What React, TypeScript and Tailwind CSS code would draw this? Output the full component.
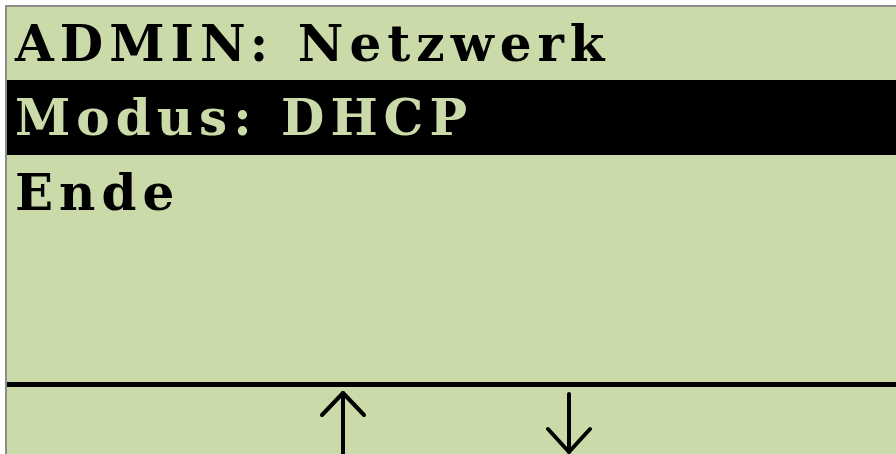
import React from 'react';

const rows = [
  { label: 'ADMIN: Netzwerk', active: false },
  { label: 'Modus: DHCP', active: true },
  { label: 'Ende', active: false },
];

function ArrowUp() {
  return (
    <svg width="48" height="70" viewBox="0 0 48 70" fill="none" stroke="#000" strokeWidth="4" strokeLinecap="round" strokeLinejoin="round">
      <path d="M24 4 L24 80" />
      <path d="M3 26 L24 4 L45 26" />
    </svg>
  );
}

function ArrowDown() {
  return (
    <svg width="48" height="70" viewBox="0 0 48 70" fill="none" stroke="#000" strokeWidth="4" strokeLinecap="round" strokeLinejoin="round">
      <path d="M24 5 L24 63" />
      <path d="M3 40 L24 63 L45 40" />
    </svg>
  );
}

export default function App() {
  return (
    <div className="w-[896px] h-[454px] bg-white pl-[5px] pt-[5px] overflow-hidden">
      <div className="flex flex-col h-[449px] w-[891px] bg-[#cbdaa9] border-l-2 border-t-2 border-[#8c8c8c] overflow-hidden">
        <div className="flex flex-col font-['DejaVu_Serif',serif] font-bold text-[50px] tracking-[6px]">
          {rows.map((r, i) => (
            <div
              key={r.label}
              className={
                (i === 0 ? 'h-[73px] leading-[73px] ' : 'h-[75px] leading-[75px] ') +
                (r.active ? 'bg-black text-[#cbdaa9]' : 'text-black') +
                ' pl-[8px] whitespace-nowrap'
              }
            >
              {r.label}
            </div>
          ))}
        </div>
        <div className="flex-1" />
        <div className="h-[5px] bg-black" />
        <div className="h-[67px] flex items-start pl-[312px] gap-[178px] pt-[2px]">
          <ArrowUp />
          <ArrowDown />
        </div>
      </div>
    </div>
  );
}
